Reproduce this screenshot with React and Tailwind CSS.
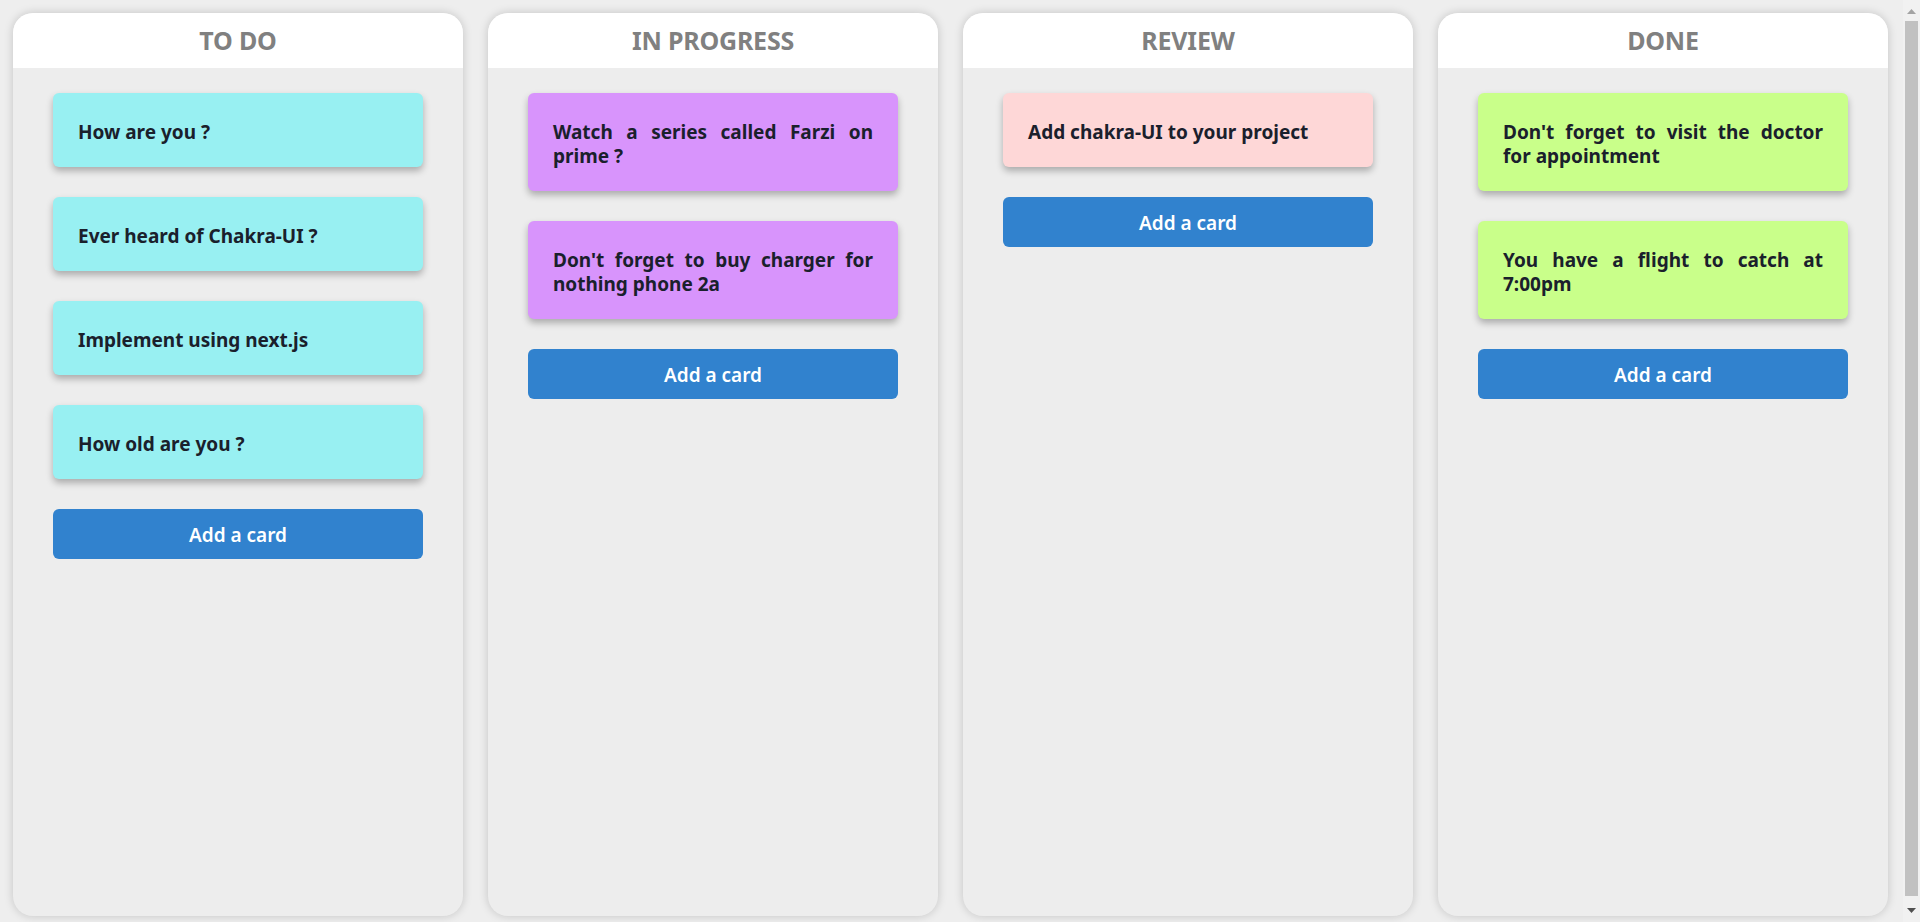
// Kanban board: four columns with sticky-note cards

const columns = [
  {
    title: 'TO DO',
    color: 'bg-[#98f0f2]',
    cards: ['How are you ?', 'Ever heard of Chakra-UI ?', 'Implement using next.js', 'How old are you ?'],
  },
  {
    title: 'IN PROGRESS',
    color: 'bg-[#d894fc]',
    cards: ['Watch a series called Farzi on prime ?', "Don't forget to buy charger for nothing phone 2a"],
  },
  {
    title: 'REVIEW',
    color: 'bg-[#fed7d7]',
    cards: ['Add chakra-UI to your project'],
  },
  {
    title: 'DONE',
    color: 'bg-[#c9ff8a]',
    cards: ["Don't forget to visit the doctor for appointment", 'You have a flight to catch at 7:00pm'],
  },
];

const Card = ({ text, color }) => {
  return (
    <div
      className={`${color} rounded-[6px] px-[25px] pt-[27px] pb-[23px] shadow-[0_4px_7px_rgba(0,0,0,0.28)] text-[#1a202c] text-[19px] font-bold leading-[24px] text-justify`}
    >
      {text}
    </div>
  );
};

const Column = ({ column }) => {
  return (
    <div className="w-[450px] h-[903px] shrink-0 rounded-[20px] bg-[#ededed] shadow-[0_0_10px_rgba(0,0,0,0.18)] overflow-hidden flex flex-col">
      {/* Header */}
      <div className="h-[55px] bg-white flex items-center justify-center">
        <h2 className="text-[25px] font-bold text-[#808080] tracking-[-0.2px]">{column.title}</h2>
      </div>

      {/* Cards */}
      <div className="px-[40px] pt-[25px] flex flex-col gap-[30px]">
        {column.cards.map((text) => (
          <Card key={text} text={text} color={column.color} />
        ))}
        <button className="h-[50px] w-full rounded-[6px] bg-[#3182ce] text-white text-[19px] font-semibold pt-[2px]">
          Add a card
        </button>
      </div>
    </div>
  );
};

// window scrollbar as it shows in the screenshot
const Scrollbar = () => {
  return (
    <div className="fixed top-0 right-0 w-[17px] h-screen bg-[#f1f1f1] flex flex-col items-center">
      <svg width="9" height="5" viewBox="0 0 9 5" className="mt-[9px] mb-[7px]">
        <polygon points="4.5,0 9,5 0,5" fill="#a3a3a3" />
      </svg>
      <div className="w-[13px] flex-1 bg-[#c1c1c1]" />
      <svg width="9" height="5" viewBox="0 0 9 5" className="mt-[12px] mb-[9px]">
        <polygon points="0,0 9,0 4.5,5" fill="#505050" />
      </svg>
    </div>
  );
};

const App = () => {
  return (
    <div
      className="min-h-screen bg-[#eeeeee] pt-[13px] pb-[22px] pl-[13px] flex gap-[25px]"
      style={{ fontFamily: '"Noto Sans", "Open Sans", sans-serif' }}
    >
      {columns.map((column) => (
        <Column key={column.title} column={column} />
      ))}
      <Scrollbar />
    </div>
  );
};

export default App;
